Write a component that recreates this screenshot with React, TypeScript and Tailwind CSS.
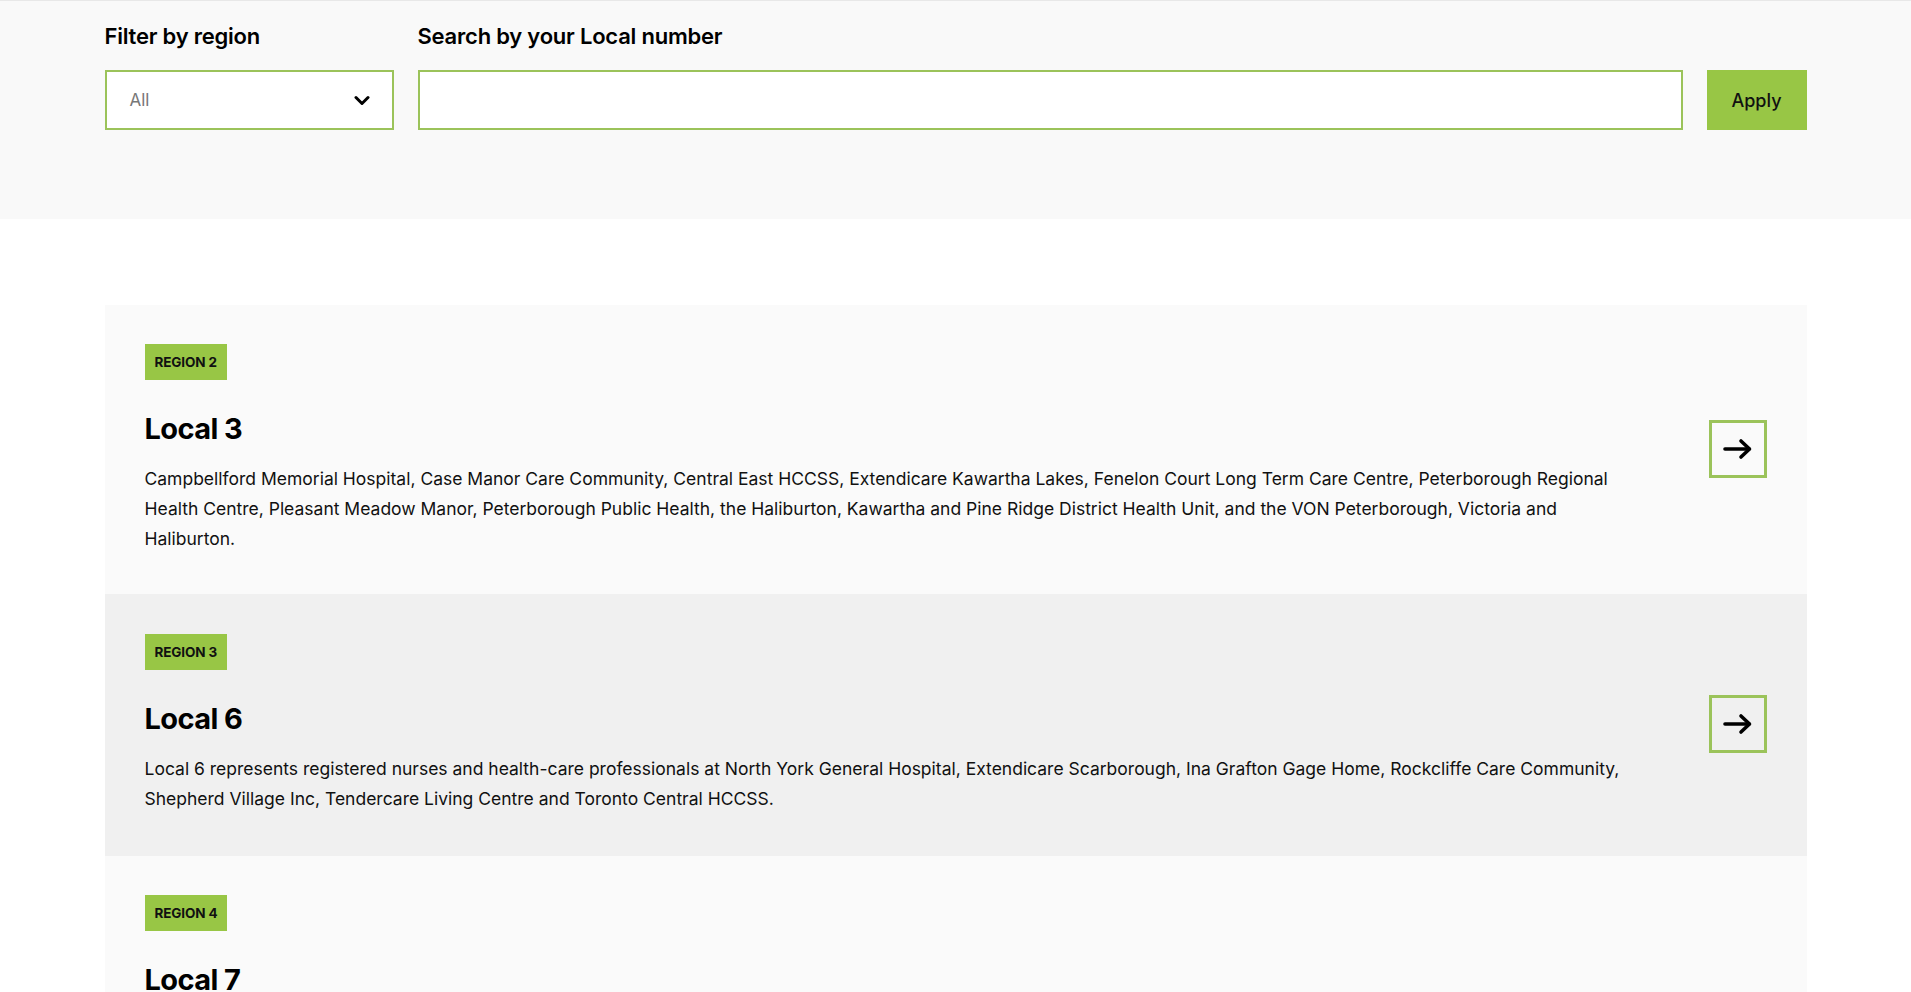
import React from "react";

type Item = { region: string; title: string; text: string; shade: "light" | "dark" };

const items: Item[] = [
  {
    region: "Region 2",
    title: "Local 3",
    text: "Campbellford Memorial Hospital, Case Manor Care Community, Central East HCCSS, Extendicare Kawartha Lakes, Fenelon Court Long Term Care Centre, Peterborough Regional Health Centre, Pleasant Meadow Manor, Peterborough Public Health, the Haliburton, Kawartha and Pine Ridge District Health Unit, and the VON Peterborough, Victoria and Haliburton.",
    shade: "light",
  },
  {
    region: "Region 3",
    title: "Local 6",
    text: "Local 6 represents registered nurses and health-care professionals at North York General Hospital, Extendicare Scarborough, Ina Grafton Gage Home, Rockcliffe Care Community, Shepherd Village Inc, Tendercare Living Centre and Toronto Central HCCSS.",
    shade: "dark",
  },
  {
    region: "Region 4",
    title: "Local 7",
    text: "Local 7 represents registered nurses and health-care professionals at hospitals, long-term care homes, public health units, home and community care agencies, clinics and community health centres across the region, including acute care, mental health, rehabilitation, complex continuing care, family health teams, community support services, retirement homes and nursing agencies. Members work in urban centres, small towns and rural communities, providing care to patients, residents and clients in every stage of life, from maternal and child health to palliative care, and advocating every day for safe staffing, quality care and fair working conditions for all health-care workers in their communities. Bargaining units in this Local include full-time, part-time and casual members, who are supported by elected bargaining unit presidents, stewards and health and safety representatives, and who take part in regional meetings, education programs and campaigns to protect and strengthen public health care for everyone in the province.",
    shade: "light",
  },
];

function Arrow() {
  return (
    <svg width="30" height="22" viewBox="0 0 30 22" fill="none" aria-hidden="true">
      <path d="M2 11H26" stroke="#000" strokeWidth="3.6" strokeLinecap="round" />
      <path d="M18 3L26.5 11L18 19" stroke="#000" strokeWidth="3.6" strokeLinecap="round" strokeLinejoin="round" />
    </svg>
  );
}

function Chevron() {
  return (
    <svg width="16" height="11" viewBox="0 0 16 11" fill="none" aria-hidden="true">
      <path d="M2 2.5L8 8.5L14 2.5" stroke="#000" strokeWidth="3" strokeLinecap="round" strokeLinejoin="round" />
    </svg>
  );
}

function Card({ item }: { item: Item }) {
  return (
    <article
      className={
        item.shade === "light"
          ? "flex items-center justify-between bg-[#fafafa] px-10 pt-[39px] pb-10"
          : "flex items-center justify-between bg-[#f0f0f0] px-10 pt-[40px] pb-[42px]"
      }
    >
      <div className="w-[1492px]">
        <span className="inline-flex h-[36px] items-center bg-[#98c645] px-[10px] text-[13.5px] font-bold uppercase tracking-[-0.01em] text-[#111]">
          {item.region}
        </span>
        <h2 className="mt-[32px] text-[29px] font-bold leading-[34px] tracking-[-0.02em] text-black">
          {item.title}
        </h2>
        <p className="mt-[18px] text-[17.5px] leading-[30px] text-[#111]">{item.text}</p>
      </div>
      <a
        href="#"
        className="flex h-[58px] w-[58px] shrink-0 items-center justify-center border-[3px] border-[#9bc35a]"
      >
        <Arrow />
      </a>
    </article>
  );
}

export default function App() {
  return (
    <div className="min-h-screen bg-white font-['Inter','Liberation_Sans',sans-serif] text-black">
      <section className="border-t border-[#e8e8e8] bg-[#f9f9f9] pt-[21px] pb-[89px]">
        <div className="mx-auto flex w-[1702px] items-end gap-6">
          <div className="w-[289px] shrink-0">
            <label className="block text-[22px] font-semibold leading-[28px] tracking-[-0.01em]">
              Filter by region
            </label>
            <div className="mt-[20px] flex h-[60px] items-center justify-between border-2 border-[#9bc35a] bg-white pl-[23px] pr-[22px]">
              <span className="pt-[2px] text-[17px] text-[#777]">All</span>
              <Chevron />
            </div>
          </div>
          <div className="flex-1">
            <label className="block text-[22px] font-semibold leading-[28px] tracking-[-0.01em]">
              Search by your Local number
            </label>
            <input
              type="text"
              className="mt-[20px] block h-[60px] w-full border-2 border-[#9bc35a] bg-white px-5 text-[17px] outline-none"
            />
          </div>
          <button className="h-[60px] w-[100px] shrink-0 bg-[#98c645] text-[18px] font-medium text-[#111]">
            Apply
          </button>
        </div>
      </section>

      <main className="mx-auto w-[1702px] pt-[86px] pb-20">
        {items.map((it) => (
          <Card key={it.title} item={it} />
        ))}
      </main>
    </div>
  );
}
